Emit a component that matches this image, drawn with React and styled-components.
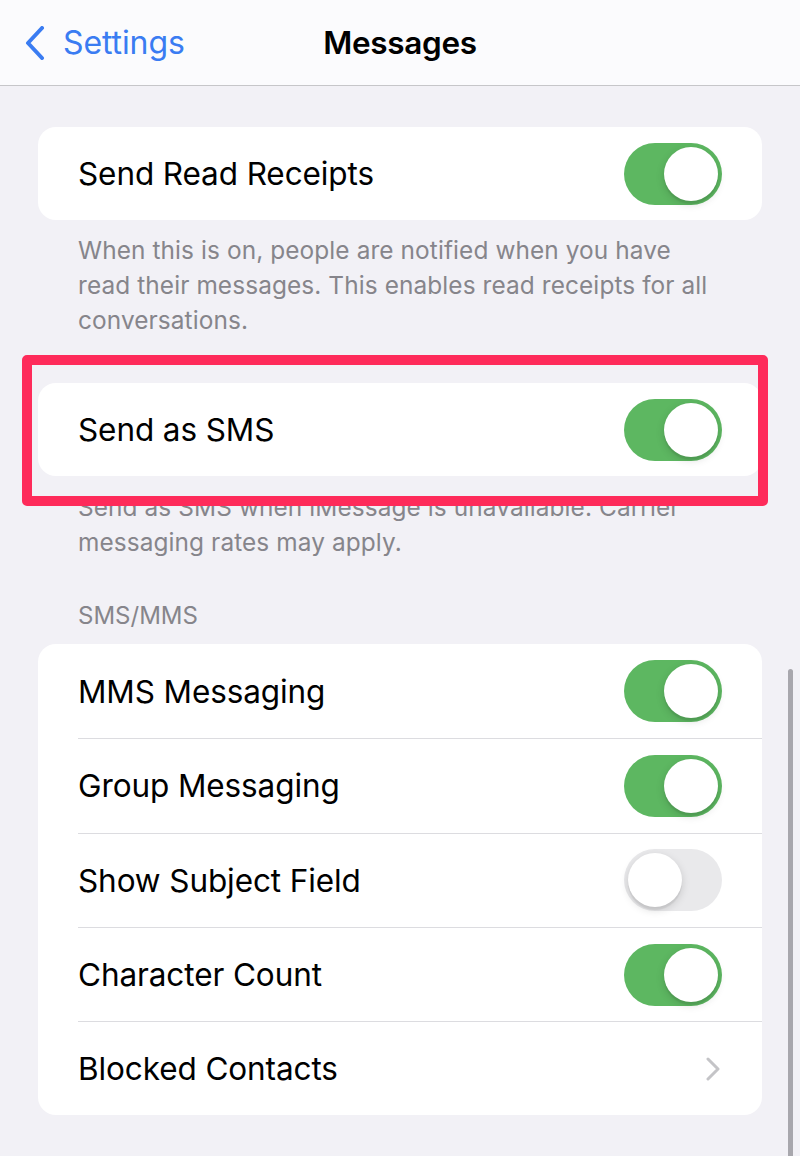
import React from "react"
import styled, { createGlobalStyle } from "styled-components"

const GlobalStyle = createGlobalStyle`
  html, body {
    margin: 0;
    padding: 0;
    background: #f2f1f6;
  }
  body {
    font-family: Inter, "Noto Sans", "Liberation Sans", sans-serif;
    -webkit-font-smoothing: antialiased;
  }
`

const Screen = styled.div`
  position: relative;
  width: 800px;
  height: 1156px;
  overflow: hidden;
  background: #f2f1f6;
`

const NavBar = styled.header`
  display: grid;
  grid-template-columns: 1fr auto 1fr;
  align-items: center;
  height: 85px;
  padding: 0 24px;
  background: #fbfbfd;
  border-bottom: 1px solid #c6c6c9;
`

const BackButton = styled.div`
  display: flex;
  align-items: center;
  gap: 17px;
  color: #3a7cf2;
  font-size: 32px;
  letter-spacing: -0.1px;
  svg {
    display: block;
  }
`

const Title = styled.h1`
  margin: 0;
  font-size: 31.5px;
  font-weight: 600;
  color: #000;
  letter-spacing: -0.3px;
`

const Content = styled.main`
  display: flex;
  flex-direction: column;
  padding: 41px 38px 0;
`

const Card = styled.section`
  background: #fff;
  border-radius: 18px;
  overflow: hidden;
`

const Row = styled.div`
  display: flex;
  align-items: center;
  justify-content: space-between;
  height: ${(p) => p.$height || 94.3}px;
  margin-left: 40px;
  padding-right: ${(p) => (p.$chevron ? 42 : 40)}px;
  box-sizing: border-box;
  border-top: ${(p) => (p.$divider ? "1px solid #dcdce0" : "none")};
`

const Label = styled.span`
  font-size: 31.5px;
  color: #000;
  letter-spacing: -0.1px;
`

const Footer = styled.p`
  margin: 0;
  padding: ${(p) => p.$top}px 40px 0;
  font-size: 24.4px;
  line-height: 35px;
  color: #86858b;
  letter-spacing: 0.1px;
`

const SectionHeader = styled.div`
  padding: 0 40px;
  margin-top: 42px;
  margin-bottom: 14px;
  font-size: 24px;
  line-height: 28px;
  color: #86858b;
  text-transform: uppercase;
`

const Highlight = styled.div`
  position: relative;
  margin-top: 45px;
  &::after {
    content: "";
    position: absolute;
    top: -28px;
    left: -16px;
    right: -6px;
    bottom: -30px;
    border: 10px solid #fe2b5a;
    border-radius: 5px;
    z-index: 2;
    pointer-events: none;
  }
`

const Track = styled.div`
  position: relative;
  width: 98px;
  height: 62px;
  border-radius: 31px;
  background: ${(p) => (p.$on ? "#5db761" : "#e9e9eb")};
  flex-shrink: 0;
`

const Knob = styled.div`
  position: absolute;
  top: 4px;
  left: ${(p) => (p.$on ? 40 : 4)}px;
  width: 54px;
  height: 54px;
  border-radius: 50%;
  background: #fff;
  box-shadow: 0 3px 8px rgba(0, 0, 0, 0.15), 0 3px 1px rgba(0, 0, 0, 0.06);
`

const ScrollBar = styled.div`
  position: absolute;
  right: 7px;
  top: 669px;
  width: 5px;
  height: 500px;
  border-radius: 3px;
  background: #a8a7ad;
`

const Toggle = ({ on }) => (
  <Track $on={on}>
    <Knob $on={on} />
  </Track>
)

const Chevron = () => (
  <svg width="14" height="24" viewBox="0 0 14 24" fill="none">
    <path
      d="M2 2l10 10L2 22"
      stroke="#c4c4c7"
      strokeWidth="3"
      strokeLinecap="round"
      strokeLinejoin="round"
    />
  </svg>
)

const smsRows = [
  { label: "MMS Messaging", on: true },
  { label: "Group Messaging", on: true },
  { label: "Show Subject Field", on: false },
  { label: "Character Count", on: true },
]

export default function App() {
  return (
    <Screen>
      <GlobalStyle />
      <NavBar>
        <BackButton>
          <svg width="22" height="34" viewBox="0 0 22 34" fill="none">
            <path
              d="M18 2L4 17l14 15"
              stroke="#3a7cf2"
              strokeWidth="4"
              strokeLinecap="round"
              strokeLinejoin="round"
            />
          </svg>
          <span>Settings</span>
        </BackButton>
        <Title>Messages</Title>
        <div />
      </NavBar>

      <Content>
        <Card>
          <Row $height={93}>
            <Label>Send Read Receipts</Label>
            <Toggle on />
          </Row>
        </Card>
        <Footer $top={13}>
          When this is on, people are notified when you have read their
          messages. This enables read receipts for all conversations.
        </Footer>

        <Highlight>
          <Card>
            <Row $height={93}>
              <Label>Send as SMS</Label>
              <Toggle on />
            </Row>
          </Card>
        </Highlight>
        <Footer $top={14}>
          Send as SMS when iMessage is unavailable. Carrier messaging rates may
          apply.
        </Footer>

        <SectionHeader>SMS/MMS</SectionHeader>
        <Card>
          {smsRows.map((row, i) => (
            <Row key={row.label} $divider={i > 0}>
              <Label>{row.label}</Label>
              <Toggle on={row.on} />
            </Row>
          ))}
          <Row $divider $chevron>
            <Label>Blocked Contacts</Label>
            <Chevron />
          </Row>
        </Card>
      </Content>

      <ScrollBar />
    </Screen>
  )
}
